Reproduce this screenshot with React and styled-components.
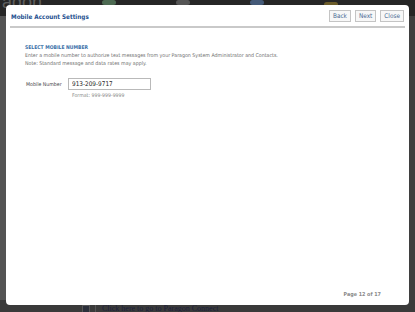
import React from 'react';
import styled, { createGlobalStyle } from 'styled-components';

const GlobalStyle = createGlobalStyle`
    html, body {
        margin: 0;
        padding: 0;
        width: 415px;
        height: 312px;
        overflow: hidden;
        background: #3b3b3b;
        font-family: "DejaVu Sans Condensed", "Liberation Sans", sans-serif;
    }
`;

const Page = styled.div`
    position: relative;
    width: 415px;
    height: 312px;
    overflow: hidden;
    background: #3c3c3c;
`;

const Backdrop = styled.div`
    display: flex;
    flex-direction: column;
    height: 100%;
`;

const TopBar = styled.div`
    height: 16px;
    display: flex;
    align-items: flex-start;
    background: #262626;
    padding-left: 2px;
    gap: 60px;
    overflow: hidden;
`;

const Logo = styled.span`
    font-family: "Liberation Sans", sans-serif;
    font-size: 18px;
    line-height: 10px;
    color: #5e5e5e;
    margin-top: -3px;
`;

const Blob = styled.span`
    width: 14px;
    height: 5px;
    border-radius: 3px;
    background: ${(p) => p.$c};
    margin-top: ${(p) => p.$t || 0}px;
`;

const Middle = styled.div`
    flex: 1;
    display: flex;
`;

const LeftStrip = styled.div`
    width: 8px;
    background: #545454;
`;

const MiddleFill = styled.div`
    flex: 1;
    background: #3f3f3f;
`;

const BottomBar = styled.div`
    height: 12px;
    display: flex;
    align-items: center;
    background: #3a3a3a;
    padding-left: 82px;
    gap: 5px;
`;

const BottomIcon = styled.span`
    width: 6px;
    height: 6px;
    background: #2b2f3a;
    border: 1px solid #555;
    margin-top: 6px;
`;

const BottomLink = styled.span`
    font-family: "Liberation Serif", serif;
    font-size: 8px;
    line-height: 8px;
    color: #1c1f3a;
    margin-top: 6px;
    padding-left: 6px;
    border-left: 1px solid #555;
`;

const Modal = styled.div`
    position: absolute;
    left: 6px;
    top: 5px;
    width: 403px;
    height: 300px;
    background: #fff;
    border-radius: 4px;
    display: flex;
    flex-direction: column;
    box-sizing: border-box;
    padding: 4px 4px 0 4px;
`;

const Header = styled.div`
    display: flex;
    align-items: center;
    justify-content: space-between;
    height: 14px;
    padding-bottom: 3px;
    border-bottom: 2px solid #c9c9c9;
`;

const Title = styled.h1`
    margin: 0;
    padding-left: 1px;
    font-family: "DejaVu Sans Condensed", "Liberation Sans", sans-serif;
    font-size: 6.3px;
    font-weight: bold;
    color: #24508f;
`;

const Buttons = styled.div`
    display: flex;
    gap: 4px;
    padding-right: 1px;
`;

const Button = styled.button`
    font-family: "DejaVu Sans Condensed", "Liberation Sans", sans-serif;
    font-size: 6.4px;
    color: #4a6a94;
    background: #f7f7f7;
    border: 1px solid #c4c4c4;
    height: 12px;
    padding: 0 3px;
    line-height: 10px;
`;

const Body = styled.div`
    flex: 1;
    display: flex;
    flex-direction: column;
    padding: 15px 0 0 15px;
`;

const SectionTitle = styled.div`
    font-family: "DejaVu Sans Condensed", "Liberation Sans", sans-serif;
    font-size: 5px;
    font-weight: bold;
    color: #3a6fa8;
    line-height: 8px;
`;

const Note = styled.p`
    margin: 0;
    font-family: "DejaVu Sans Condensed", "Liberation Sans", sans-serif;
    font-size: 5.25px;
    line-height: 8px;
    color: #707070;
`;

const FieldRow = styled.div`
    display: flex;
    align-items: center;
    gap: 5px;
    margin-top: 11px;
    padding-left: 1px;
`;

const Label = styled.label`
    font-family: "DejaVu Sans Condensed", "Liberation Sans", sans-serif;
    font-size: 5.2px;
    color: #444;
    width: 37px;
    white-space: nowrap;
`;

const Input = styled.input`
    width: 83px;
    height: 12px;
    box-sizing: border-box;
    border: 1px solid #b9b9b9;
    padding: 0 3px;
    font-family: "DejaVu Sans Condensed", "Liberation Sans", sans-serif;
    font-size: 6.4px;
    color: #222;
    outline: none;
`;

const Hint = styled.div`
    font-family: "DejaVu Sans Condensed", "Liberation Sans", sans-serif;
    font-size: 5.2px;
    color: #8a8a8a;
    padding-left: 47px;
    margin-top: 2px;
`;

const Footer = styled.div`
    display: flex;
    justify-content: flex-end;
    padding: 0 24px 8px 0;
`;

const PageInfo = styled.span`
    font-family: "DejaVu Sans Condensed", "Liberation Sans", sans-serif;
    font-size: 5.4px;
    font-weight: bold;
    color: #8a8a8a;
`;

export default function App() {
    return (
        <Page>
            <GlobalStyle />
            <Backdrop>
                <TopBar>
                    <Logo>agon</Logo>
                    <Blob $c="#4d6a52" />
                    <Blob $c="#555" />
                    <Blob $c="#445a78" />
                    <Blob $c="#6b5c2a" $t={2} />
                </TopBar>
                <Middle>
                    <LeftStrip />
                    <MiddleFill />
                </Middle>
                <BottomBar>
                    <BottomIcon />
                    <BottomLink>Click here to go to Paragon Connect</BottomLink>
                </BottomBar>
            </Backdrop>
            <Modal>
                <Header>
                    <Title>Mobile Account Settings</Title>
                    <Buttons>
                        <Button>Back</Button>
                        <Button>Next</Button>
                        <Button>Close</Button>
                    </Buttons>
                </Header>
                <Body>
                    <SectionTitle>SELECT MOBILE NUMBER</SectionTitle>
                    <Note>Enter a mobile number to authorize text messages from your Paragon System Administrator and Contacts.</Note>
                    <Note>Note: Standard message and data rates may apply.</Note>
                    <FieldRow>
                        <Label>Mobile Number</Label>
                        <Input defaultValue="913-209-9717" />
                    </FieldRow>
                    <Hint>Format: 999-999-9999</Hint>
                </Body>
                <Footer>
                    <PageInfo>Page 12 of 17</PageInfo>
                </Footer>
            </Modal>
        </Page>
    );
}
